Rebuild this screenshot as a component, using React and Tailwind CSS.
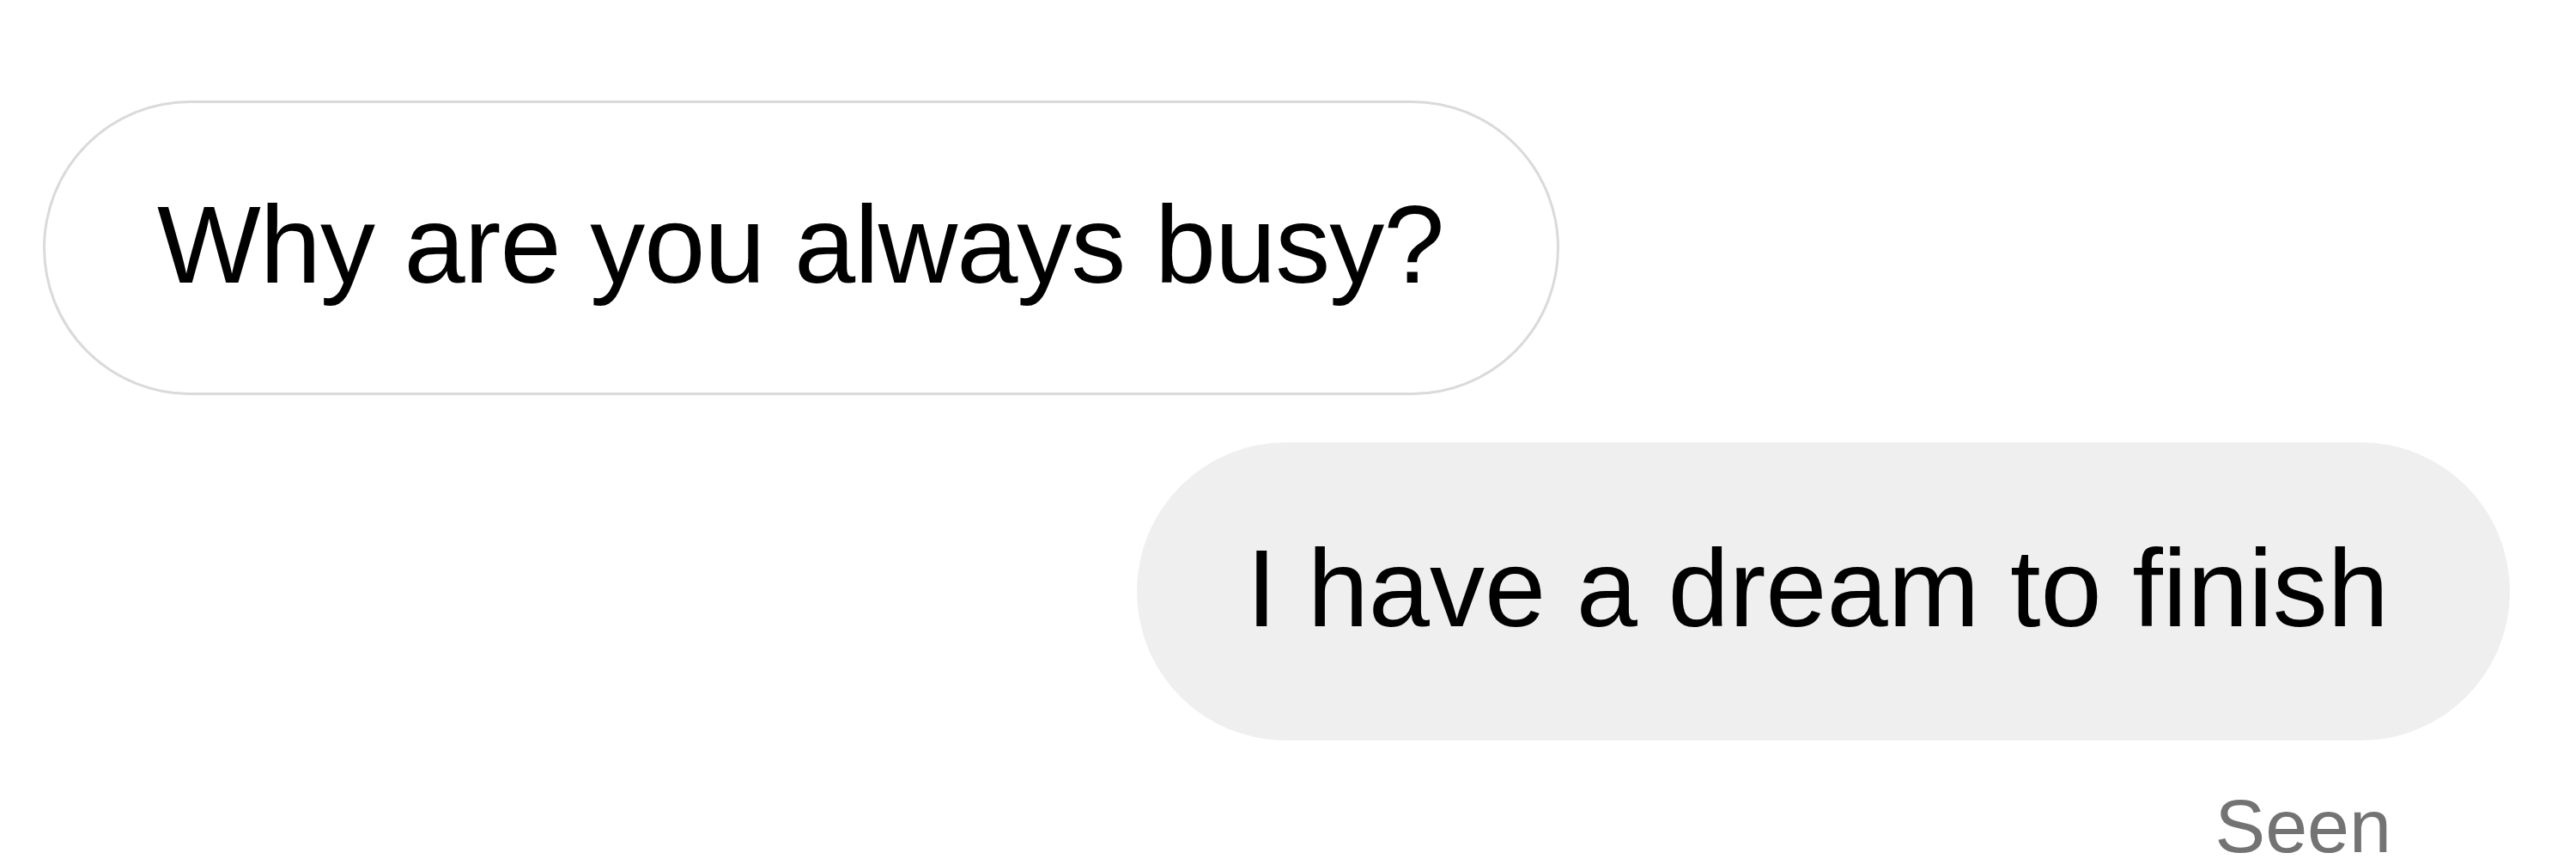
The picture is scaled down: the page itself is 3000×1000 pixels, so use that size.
export default function App() {
  return (
    <div
      className="w-[3000px] h-[1000px] bg-white overflow-hidden flex flex-col pt-[117px]"
      style={{ fontFamily: '"Liberation Sans", Arial, sans-serif' }}
    >
      <div className="self-start ml-[50px] h-[343px] flex items-center pl-[130px] pr-[132px] pb-[8px] rounded-full border-[3px] border-[#dadada] bg-white">
        <span className="text-[128px] leading-none text-black tracking-[-1px]">
          Why are you always busy?
        </span>
      </div>

      <div className="self-end mr-[77px] mt-[55px] h-[347px] flex items-center pl-[128px] pr-[141px] pb-[8px] rounded-full bg-[#efefef]">
        <span className="text-[128px] leading-none text-black">
          I have a dream to finish
        </span>
      </div>

      <div className="self-end mr-[215px] mt-[65px] text-[88px] leading-[0.8] text-[#737373]">
        Seen
      </div>
    </div>
  );
}
